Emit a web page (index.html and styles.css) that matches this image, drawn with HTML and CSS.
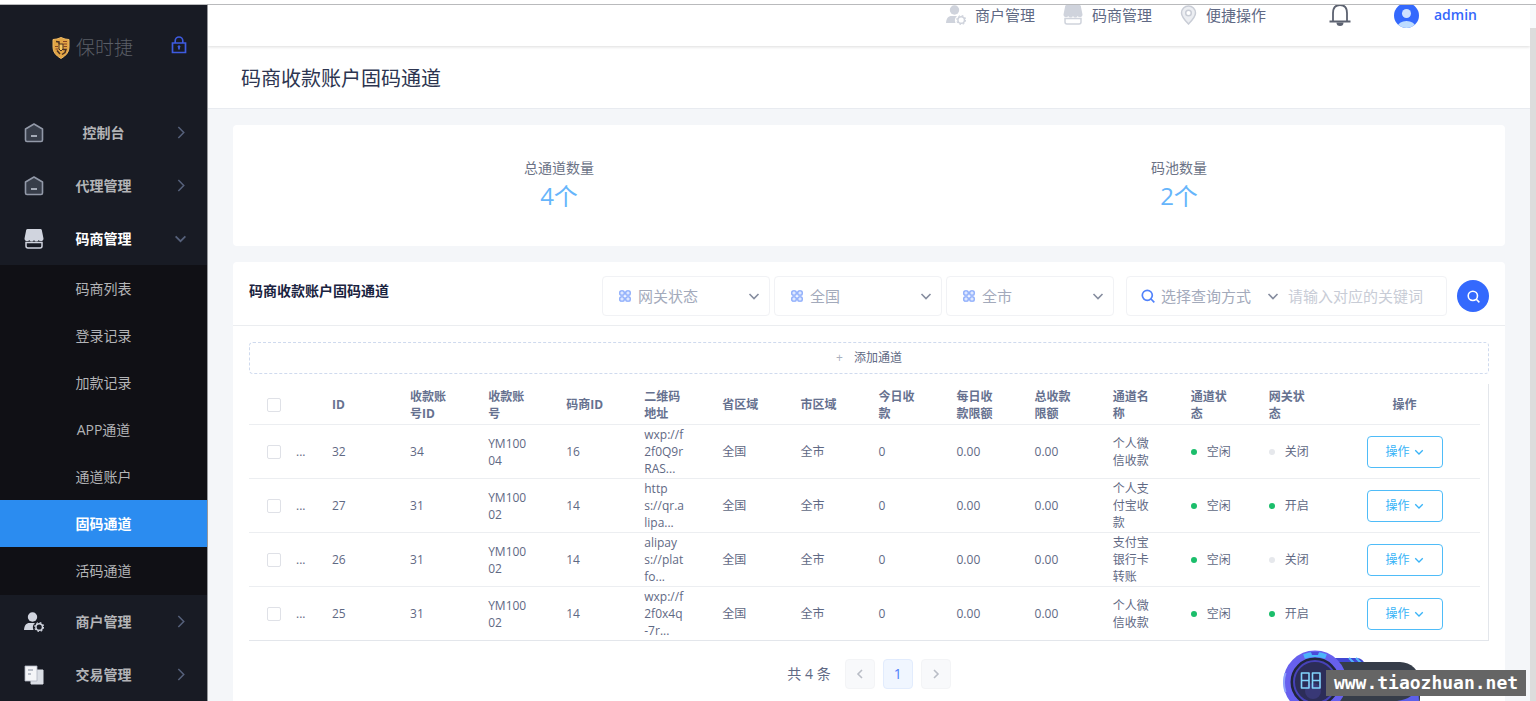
FILE: index.html
```html
<!DOCTYPE html>
<html lang="zh-CN">
<head>
<meta charset="utf-8">
<title>码商收款账户固码通道</title>
<link rel="stylesheet" href="styles.css">
</head>
<body>
<svg class="sprite" aria-hidden="true">
  <symbol id="i-right" viewBox="0 0 12 12"><path d="M4 1l5 5-5 5" fill="none" stroke="currentColor" stroke-width="1.4"/></symbol>
  <symbol id="i-left" viewBox="0 0 12 12"><path d="M8 2L4 6l4 4" fill="none" stroke="currentColor" stroke-width="1.6"/></symbol>
  <symbol id="i-next" viewBox="0 0 12 12"><path d="M4 2l4 4-4 4" fill="none" stroke="currentColor" stroke-width="1.6"/></symbol>
  <symbol id="i-down" viewBox="0 0 12 12"><path d="M1.500 4L6 8.500l4.500-4.500" fill="none" stroke="currentColor" stroke-width="1.600"/></symbol>
  <symbol id="i-home" viewBox="0 0 20 20"><path d="M1.500 6L10 1l8.500 5v11a1.500 1.500 0 0 1-1.500 1.500H3a1.500 1.500 0 0 1-1.500-1.500z" fill="#373d49" stroke="#9299a8" stroke-width="1.600" stroke-linejoin="round"/><path d="M7 13h6" stroke="#b9bfca" stroke-width="1.700"/></symbol>
  <symbol id="i-shop" viewBox="0 0 20 20"><path d="M2 13.500V17a2 2 0 0 0 2 2h12a2 2 0 0 0 2-2v-3.500z" fill="none" stroke="currentColor" stroke-width="1.500"/><path d="M3.500 0h13q1 0 1.300 1L19.500 9.500c0 3-3.500 3.500-4.750 1.500-1.250 2-3.500 2-4.750 0-1.250 2-3.500 2-4.750 0C4 13 .5 12.500.5 9.500L2.200 1q.3-1 1.300-1z" fill="currentColor"/></symbol>
  <symbol id="i-user" viewBox="0 0 20 20"><circle cx="8.500" cy="5" r="4.700" fill="currentColor"/><path d="M0 18c.3-4.500 2.200-7 5.500-7H11a6 6 0 0 0-1.500 7z" fill="currentColor"/><circle cx="15.200" cy="15" r="3.300" fill="none" stroke="currentColor" stroke-width="1.500"/><circle cx="15.200" cy="15" r="4.400" fill="none" stroke="currentColor" stroke-width="1.200" stroke-dasharray="1.700 1.750"/></symbol>
  <symbol id="i-docs" viewBox="0 0 20 20"><path d="M7 5h12v14H7z" fill="#dadee5" stroke="#dadee5" stroke-linejoin="round"/><path d="M1 1h12v15H1z" fill="#f4f5f8" stroke="#aeb4c0" stroke-width=".8" stroke-linejoin="round"/><path d="M4 5h5M4 9h3" stroke="#a8aebb" stroke-width="1.300"/></symbol>
  <symbol id="i-grid" viewBox="0 0 12 12"><g fill="#dfe8ff" stroke="#85a7fb" stroke-width="1.300"><rect x=".8" y=".8" width="4.400" height="4.400" rx="1.300"/><rect x="6.800" y=".8" width="4.400" height="4.400" rx="1.300"/><rect x=".8" y="6.800" width="4.400" height="4.400" rx="1.300"/><rect x="6.800" y="6.800" width="4.400" height="4.400" rx="1.300"/></g></symbol>
  <symbol id="i-search" viewBox="0 0 14 14"><circle cx="6.300" cy="6.300" r="5" fill="none" stroke="currentColor" stroke-width="1.700"/><path d="M10 10l3.300 3.300" stroke="currentColor" stroke-width="1.700"/></symbol>
</svg>

<div class="app">
  <aside class="sidebar">
    <div class="brand">
      <svg class="shield" viewBox="0 0 18 22"><path d="M1 2.500Q5 2.500 9 .5q4 2 8 2v8Q17 17 9 21.500 1 17 1 10.500z" fill="#e2a545" stroke="#f0ba63"/><path d="M4 4.500l3 .5v2M11 12.500h3l-1 3-3 2M5 13.500l3 3.500" fill="none" stroke="#4a3022" stroke-width="1.500"/><path d="M11 4.500h4M11 7h4M11.500 9.500H15M3 9.500h3M3.500 12h3" stroke="#8a4524" stroke-width="1"/><path d="M7 7h4v5l-2 2-2-2z" fill="#f6c75f" stroke="#4a3022"/></svg>
      <span class="brand-name">保时捷</span>
      <svg class="lock" viewBox="0 0 16 18"><path d="M1.500 7h13v9.500h-13z" fill="none" stroke="currentColor" stroke-width="1.700"/><path d="M4.200 7V4.800a3.800 3.800 0 0 1 7.600 0V7" fill="none" stroke="currentColor" stroke-width="1.600"/><path d="M7 10h2l-1 3.500z" fill="currentColor" stroke="currentColor"/></svg>
    </div>
    <nav class="menu">
      <a class="item" href="#"><svg class="ico"><use href="#i-home"/></svg><span>控制台</span><svg class="arrow"><use href="#i-right"/></svg></a>
      <a class="item" href="#"><svg class="ico"><use href="#i-home"/></svg><span>代理管理</span><svg class="arrow"><use href="#i-right"/></svg></a>
      <a class="item open" href="#"><svg class="ico"><use href="#i-shop"/></svg><span>码商管理</span><svg class="arrow"><use href="#i-down"/></svg></a>
      <div class="submenu">
        <a href="#">码商列表</a>
        <a href="#">登录记录</a>
        <a href="#">加款记录</a>
        <a href="#">APP通道</a>
        <a href="#">通道账户</a>
        <a class="current" href="#">固码通道</a>
        <a href="#">活码通道</a>
      </div>
      <a class="item" href="#"><svg class="ico"><use href="#i-user"/></svg><span>商户管理</span><svg class="arrow"><use href="#i-right"/></svg></a>
      <a class="item" href="#"><svg class="ico"><use href="#i-docs"/></svg><span>交易管理</span><svg class="arrow"><use href="#i-right"/></svg></a>
    </nav>
  </aside>

  <main class="main">
    <header class="topbar">
      <div class="topbar-inner">
        <nav class="quick">
          <a href="#"><svg class="ico"><use href="#i-user"/></svg>商户管理</a>
          <a href="#"><svg class="ico"><use href="#i-shop"/></svg>码商管理</a>
          <a href="#"><svg class="pin" viewBox="0 0 17 20"><path d="M8.500 1a7 7 0 0 1 7 7c0 4-3.500 7.500-7 11-3.500-3.500-7-7-7-11a7 7 0 0 1 7-7z" fill="#eceef2" stroke="#c9cdd6" stroke-width="1.500"/><circle cx="8.500" cy="8" r="2.800" fill="#fff" stroke="#c9cdd6" stroke-width="1.500"/></svg>便捷操作</a>
        </nav>
        <button class="bell" type="button" aria-label="通知"><svg viewBox="0 0 22 24"><path d="M4 18V10C4 4.500 7 2 11 2S18 4.500 18 10v8M.5 18.500h21" fill="none" stroke="currentColor" stroke-width="1.800"/><path d="M7.500 19.500a3.500 3.500 0 0 0 7 0z" fill="currentColor"/></svg></button>
        <a class="account" href="#"><svg class="avatar" viewBox="0 0 25 25"><defs><clipPath id="face"><circle cx="12.500" cy="12.500" r="12.500"/></clipPath></defs><g clip-path="url(#face)"><path d="M0 0h25v25H0z" fill="#3469fd"/><circle cx="12.500" cy="10.500" r="4.500" fill="#cfe2ff"/><ellipse cx="12.500" cy="24" rx="9" ry="6" fill="#bddcff"/></g></svg>admin</a>
      </div>
    </header>
    <h1 class="page-title">码商收款账户固码通道</h1>

    <div class="content">
      <section class="card stats">
        <div class="stat"><span>总通道数量</span><strong>4个</strong></div>
        <div class="stat"><span>码池数量</span><strong>2个</strong></div>
      </section>

      <section class="card list">
        <header class="list-head">
          <h2>码商收款账户固码通道</h2>
          <form class="filters">
            <label class="box pick"><svg class="grid"><use href="#i-grid"/></svg><select aria-label="网关状态"><option>网关状态</option></select><svg class="caret"><use href="#i-down"/></svg></label>
            <label class="box pick"><svg class="grid"><use href="#i-grid"/></svg><select aria-label="省区域"><option>全国</option></select><svg class="caret"><use href="#i-down"/></svg></label>
            <label class="box pick"><svg class="grid"><use href="#i-grid"/></svg><select aria-label="市区域"><option>全市</option></select><svg class="caret"><use href="#i-down"/></svg></label>
            <div class="box query">
              <svg class="lens"><use href="#i-search"/></svg>
              <select aria-label="查询方式"><option>选择查询方式</option></select>
              <svg class="caret"><use href="#i-down"/></svg>
              <input type="text" aria-label="关键词" placeholder="请输入对应的关键词">
            </div>
            <button class="go" type="submit" aria-label="搜索"><svg><use href="#i-search"/></svg></button>
          </form>
        </header>

        <div class="list-body">
          <button class="add" type="button"><span class="plus">+</span>添加通道</button>
          <div class="table-wrap">
            <table>
              <colgroup><col class="c-check"><col class="c-more"><col span="13"><col class="c-action"></colgroup>
              <thead>
                <tr>
                  <th><input type="checkbox" aria-label="全选"></th><th class="more"></th><th>ID</th><th>收款账<br>号ID</th><th>收款账<br>号</th><th>码商ID</th><th>二维码<br>地址</th><th>省区域</th><th>市区域</th><th>今日收<br>款</th><th>每日收<br>款限额</th><th>总收款<br>限额</th><th>通道名<br>称</th><th>通道状<br>态</th><th>网关状<br>态</th><th class="action">操作</th>
                </tr>
              </thead>
              <tbody>
                <tr>
                  <td><input type="checkbox" aria-label="选择 32"></td><td class="more">...</td><td>32</td><td>34</td><td>YM100<br>04</td><td>16</td><td>wxp://f<br>2f0Q9r<br>RAS...</td><td>全国</td><td>全市</td><td>0</td><td>0.00</td><td>0.00</td><td>个人微<br>信收款</td><td><span class="state on">空闲</span></td><td><span class="state">关闭</span></td><td class="action"><button type="button">操作<svg><use href="#i-down"/></svg></button></td>
                </tr>
                <tr>
                  <td><input type="checkbox" aria-label="选择 27"></td><td class="more">...</td><td>27</td><td>31</td><td>YM100<br>02</td><td>14</td><td>http<br>s://qr.a<br>lipa...</td><td>全国</td><td>全市</td><td>0</td><td>0.00</td><td>0.00</td><td>个人支<br>付宝收<br>款</td><td><span class="state on">空闲</span></td><td><span class="state on">开启</span></td><td class="action"><button type="button">操作<svg><use href="#i-down"/></svg></button></td>
                </tr>
                <tr>
                  <td><input type="checkbox" aria-label="选择 26"></td><td class="more">...</td><td>26</td><td>31</td><td>YM100<br>02</td><td>14</td><td>alipay<br>s://plat<br>fo...</td><td>全国</td><td>全市</td><td>0</td><td>0.00</td><td>0.00</td><td>支付宝<br>银行卡<br>转账</td><td><span class="state on">空闲</span></td><td><span class="state">关闭</span></td><td class="action"><button type="button">操作<svg><use href="#i-down"/></svg></button></td>
                </tr>
                <tr>
                  <td><input type="checkbox" aria-label="选择 25"></td><td class="more">...</td><td>25</td><td>31</td><td>YM100<br>02</td><td>14</td><td>wxp://f<br>2f0x4q<br>-7r...</td><td>全国</td><td>全市</td><td>0</td><td>0.00</td><td>0.00</td><td>个人微<br>信收款</td><td><span class="state on">空闲</span></td><td><span class="state on">开启</span></td><td class="action"><button type="button">操作<svg><use href="#i-down"/></svg></button></td>
                </tr>
              </tbody>
            </table>
          </div>
          <nav class="pager" aria-label="分页">
            <span>共 4 条</span>
            <button type="button" aria-label="上一页"><svg><use href="#i-left"/></svg></button>
            <button class="current" type="button">1</button>
            <button type="button" aria-label="下一页"><svg><use href="#i-next"/></svg></button>
          </nav>
        </div>
      </section>
    </div>
  </main>
  <div class="scroll"><div class="thumb"></div></div>
</div>

<div class="float">
  <svg class="gauge" viewBox="0 0 140 52">
    <path d="M40 9h34q6 0 9 8H40z" fill="#4146d2"/>
    <path d="M66 9l6 6M73 9l6 6" stroke="#52b4fa" stroke-width="2"/>
    <rect x="20" y="13" width="117" height="56" rx="20" fill="#363d49"/>
    <path d="M114 52q17-2 21-15l1 15z" fill="#5c5fea"/>
    <circle cx="32" cy="33" r="28" fill="#21263c" stroke="#6760ee" stroke-width="7"/>
    <path d="M2.500 43a31 31 0 0 1 0-19" fill="none" stroke="#8fa4fb" stroke-width="2"/>
    <path d="M21 7.500q11-4 22 0" fill="none" stroke="#4cb4fa" stroke-width="5"/>
    <path d="M28 3h8l-1 3h-6z" fill="#4a4bd8"/>
    <circle cx="32" cy="33" r="21" fill="#2c2d58" stroke="#4742b8" stroke-width="2"/>
    <circle cx="30" cy="42" r="8" fill="#41408a" opacity=".6"/>
    <g fill="none" stroke="#82d3fb" stroke-width="1.600" stroke-linejoin="round"><path d="M18.500 24h7.500v15h-7.500zM18.500 31.500h7.500M29.500 24H37v15h-7.500zM29.500 31.500H37"/></g>
  </svg>
  <span class="site">www.tiaozhuan.net</span>
</div>
</body>
</html>
```
FILE: styles.css
```css
* { box-sizing: border-box; }
body {
  margin: 0;
  height: 100vh;
  overflow: hidden;
  position: relative;
  background: #fff;
  color: #5f6984;
  font: 14px/20px "Open Sans", "Noto Sans CJK SC", sans-serif;
}
a { color: inherit; text-decoration: none; }
button, input, select { font: inherit; color: inherit; margin: 0; }
button { cursor: pointer; padding: 0; display: flex; align-items: center; justify-content: center; }
svg { display: block; flex: none; }
.sprite { display: none; }

.app {
  display: flex;
  height: 100%;
  padding-top: 4px;
}
.app > * { border-top: 1px solid #b9babc; }

/* sidebar */
.sidebar {
  width: 208px;
  flex: none;
  background: #181b24;
  border-right: 1px solid #96989c;
  color: #b3b4b7;
  overflow: hidden;
}
.brand {
  display: flex;
  align-items: center;
  height: 101px;
  padding: 0 20px 16px 52px;
}
.shield { width: 18px; height: 22px; margin-right: 6px; }
.brand-name {
  flex: 1;
  font-size: 19px;
  color: #5a5e66;
  font-weight: 300;
}
.lock { width: 16px; height: 18px; color: #3e5be0; margin-bottom: 6px; }
.item {
  display: grid;
  grid-template-columns: 20px 1fr 24px;
  align-items: center;
  height: 53px;
  padding: 0 20px 0 24px;
  font-weight: 700;
  text-align: center;
}
.item.open { color: #fff; }
.item .ico { width: 20px; height: 20px; color: #d0d4de; }
.item .arrow { width: 13px; height: 13px; justify-self: end; color: #56617b; }
.submenu { padding-bottom: 1px; background: #101015; }
.submenu a {
  display: block;
  text-align: center;
  line-height: 47px;
}
.submenu .current { background: #2b8cf0; color: #fff; font-weight: 700; }

/* main column */
.main {
  flex: 1;
  min-width: 0;
  overflow: hidden;
  background: #f4f6f9;
}
.topbar {
  height: 41px;
  overflow: hidden;
  background: #fff;
  box-shadow: 0 1px 3px rgba(0, 0, 0, .14);
  position: relative;
}
.topbar-inner {
  display: flex;
  align-items: center;
  justify-content: flex-end;
  height: 60px;
  margin-top: -20px;
  padding-right: 53px;
  font-size: 15px;
}
.quick { display: flex; gap: 28px; margin-right: 63px; }
.quick a { display: flex; align-items: center; gap: 9px; }
.quick .ico { width: 20px; height: 20px; color: #cfd3dc; }
.pin { width: 17px; height: 20px; }
.bell { border: 0; background: none; color: #5c6270; margin-right: 43px; }
.bell svg { width: 22px; height: 24px; }
.account {
  display: flex;
  align-items: center;
  gap: 15px;
  color: #3467fb;
  font-size: 14px;
  font-weight: 600;
}
.avatar { width: 25px; height: 25px; }
.page-title {
  margin: 0;
  padding: 18px 33px 14px;
  background: #fff;
  border-bottom: 1px solid #e8ebf0;
  color: #2d3550;
  font-size: 20px;
  font-weight: 400;
  line-height: 30px;
}
.content {
  display: flex;
  flex-direction: column;
  gap: 16px;
  padding: 16px 25px;
}
.card { background: #fff; border-radius: 4px; }
.stats {
  display: grid;
  grid-template-columns: 1fr 1fr;
  padding: 33px 16px 32px;
  text-align: center;
}
.stat { display: flex; flex-direction: column; color: #6b7286; }
.stat strong {
  color: #66b5fb;
  font-size: 24px;
  font-weight: 400;
  line-height: 36px;
}

/* filters */
.list-head {
  display: flex;
  justify-content: space-between;
  padding: 14px 16px 9px;
  border-bottom: 1px solid #ebedf0;
}
.list-head h2 {
  margin: 0;
  color: #1a2340;
  font-size: 14px;
  font-weight: 700;
  line-height: 30px;
}
.filters { display: flex; gap: 4px; align-items: center; font-size: 15px; color: #a3aabb; }
.box {
  display: flex;
  align-items: center;
  height: 40px;
  border: 1px solid #f1f2f5;
  border-radius: 4px;
}
.pick { width: 168px; padding: 0 9px 0 16px; }
.box select {
  appearance: none;
  flex: 1;
  min-width: 0;
  padding: 0;
  border: 0;
  background: none;
}
.grid { width: 12px; height: 12px; margin-right: 7px; }
.caret { width: 12px; height: 12px; color: #868d9f; }
.query { width: 321px; margin: 0 6px 0 8px; padding: 0 14px; }
.query select { flex: 1; }
.query input {
  width: 144px;
  margin-left: 9px;
  padding: 0;
  border: 0;
  outline: 0;
  background: none;
}
.query input::placeholder { color: #c8ccd6; }
.lens { width: 14px; height: 14px; margin-right: 6px; color: #5182fb; }
.go {
  width: 32px;
  height: 32px;
  border: 0;
  border-radius: 50%;
  background: #3469fd;
  color: #fff;
}
.go svg { width: 13px; height: 13px; }

/* table */
.list-body { padding: 16px; }
.add {
  width: 100%;
  height: 32px;
  gap: 11px;
  border: 1px dashed #cfdaee;
  border-radius: 4px;
  background: none;
  font-size: 12px;
}
.plus { color: #a9b0be; }
.table-wrap {
  margin-top: 10px;
  padding-right: 8px;
  border-right: 1px solid #e3e6eb;
  border-bottom: 1px solid #e3e6eb;
}
table {
  width: 100%;
  table-layout: fixed;
  border-collapse: separate;
  border-spacing: 0;
  font-size: 12px;
  line-height: 17px;
}
.c-check { width: 43px; }
.c-more { width: 22px; }
.c-action { width: 151px; }
th, td {
  height: 54px;
  padding: 1px 0 1px 18px;
  border-bottom: 1px solid #eceef1;
  text-align: left;
  vertical-align: middle;
  white-space: nowrap;
}
th { height: 41px; padding-top: 2px; color: #66718f; font-weight: 700; }
tbody tr:last-child td { height: 53px; border-bottom: 0; }
.more { padding-left: 4px; }
.action { padding: 0; text-align: center; }
input[type="checkbox"] {
  appearance: none;
  display: block;
  width: 14px;
  height: 14px;
  border: 1px solid #dfe1e7;
  border-radius: 2px;
  background: #fff;
}
.state { display: flex; align-items: center; gap: 10px; }
.state::before {
  content: "";
  width: 6px;
  height: 6px;
  border-radius: 50%;
  background: #e6e8ec;
}
.state.on::before { background: #1bbe6b; }
.action button {
  width: 76px;
  height: 32px;
  margin: 0 auto;
  gap: 4px;
  border: 1px solid #4fbcf8;
  border-radius: 4px;
  background: #fff;
  color: #38b3f7;
}
.action button svg { width: 10px; height: 10px; }

/* pager */
.pager {
  display: flex;
  align-items: center;
  justify-content: center;
  gap: 8px;
  margin-top: 18px;
}
.pager span { margin-right: 6px; }
.pager button {
  width: 30px;
  height: 30px;
  border: 1px solid #f3f4f6;
  border-radius: 4px;
  background: #f8f9fb;
  color: #b9bdc6;
}
.pager svg { width: 12px; height: 12px; }
.pager .current { background: #f0f6ff; border-color: #e2ecfd; color: #4d7dfb; }

.scroll { width: 6px; flex: none; background: #f7f9fb; padding-top: 23px; }
.thumb { height: 100%; background: #dcdcdc; }

/* floating widget */
.float {
  position: absolute;
  right: 10px;
  bottom: 0;
  width: 243px;
  height: 52px;
}
.gauge { width: 140px; height: 52px; }
.site {
  position: absolute;
  right: 0;
  bottom: 5px;
  width: 200px;
  background: #656565;
  color: #fff;
  font: 700 18px/26px "DejaVu Sans Mono", monospace;
  text-align: center;
}
```
